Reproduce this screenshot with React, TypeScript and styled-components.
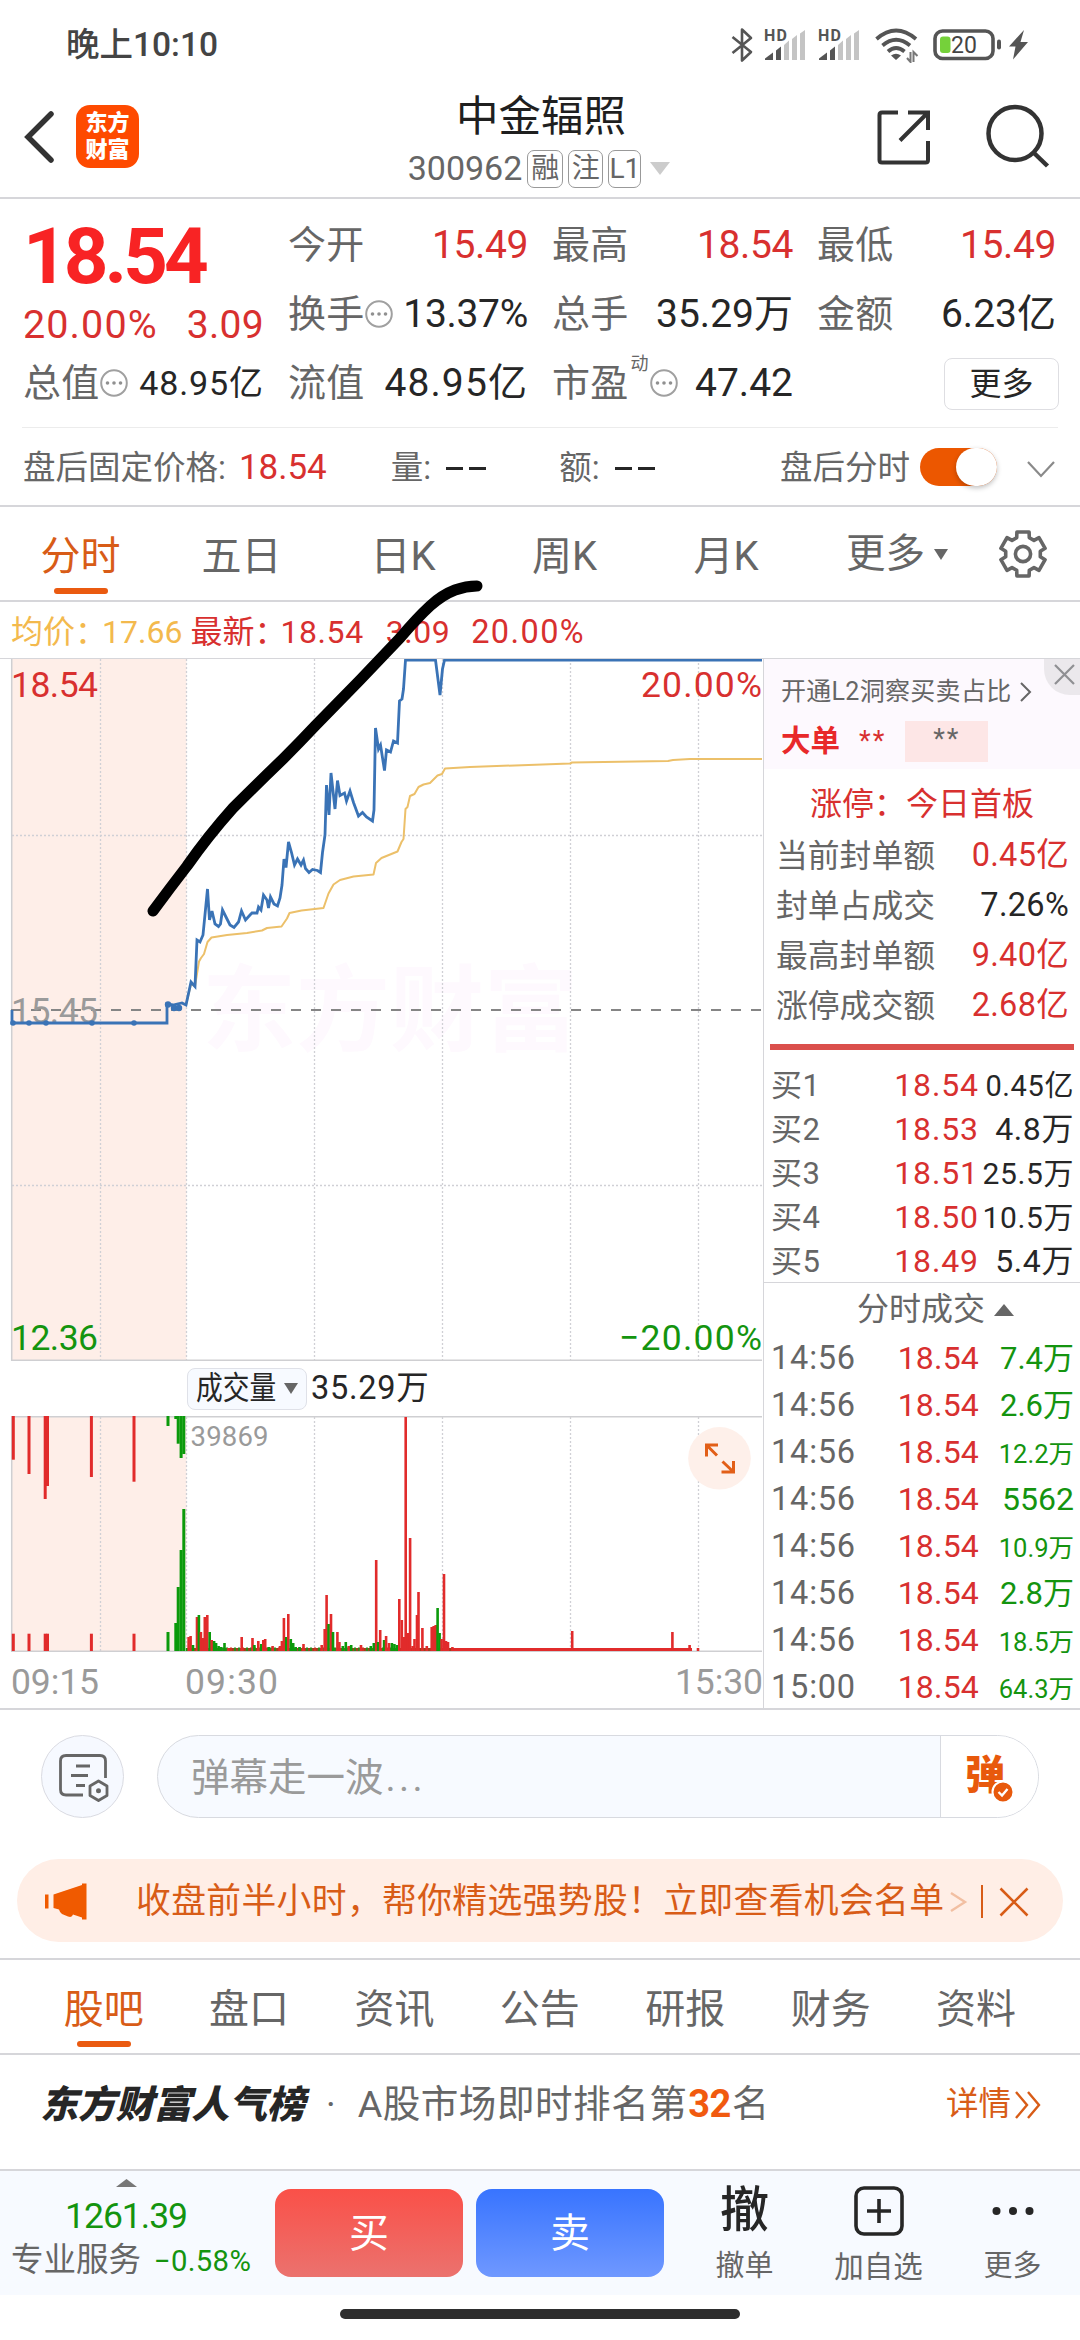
import React from "react";
import styled, { createGlobalStyle, css } from "styled-components";

const RED = "#d8302f";
const GREEN = "#14940f";
const GREY = "#666666";
const DARK = "#262626";
const ORANGE = "#d85c17";
const LINE = "#d6d6da";

const GlobalStyle = createGlobalStyle`
  html, body { margin: 0; padding: 0; background: #fff; }
  body { width: 1080px; overflow-x: hidden; font-family: Roboto, "Noto Sans CJK SC", sans-serif; }
  * { box-sizing: border-box; }
  svg { display: block; flex: none; }
`;

interface TxtProps {
  $s: number;
  $c?: string;
  $w?: number;
  $ls?: number;
  $ml?: number;
  $dy?: number;
}

const Txt = styled.span<TxtProps>`
  display: block;
  flex: none;
  white-space: nowrap;
  line-height: 1.1;
  font-size: ${(p) => p.$s}px;
  color: ${(p) => p.$c ?? GREY};
  font-weight: ${(p) => p.$w ?? 400};
  letter-spacing: ${(p) => p.$ls ?? 0}px;
  margin-left: ${(p) => p.$ml ?? 0}px;
  ${(p) => p.$dy !== undefined && css`padding-top: ${p.$dy}px;`}
`;

const Page = styled.main`
  position: relative;
  width: 1080px;
  height: 2340px;
  display: flex;
  flex-direction: column;
  background: #fff;
  overflow: hidden;
`;

/* ---------- status bar ---------- */
const StatusBar = styled.header`
  height: 88px;
  padding: 2px 51px 0 66px;
  display: flex;
  align-items: center;
  justify-content: space-between;
`;
const StatusIcons = styled.div`
  display: flex;
  align-items: center;
`;

/* ---------- title bar ---------- */
const TitleBar = styled.div`
  height: 111px;
  display: grid;
  grid-template-columns: 380px 1fr 380px;
  border-bottom: 2px solid ${LINE};
`;
const TitleLeft = styled.div`
  display: flex;
  align-items: center;
  padding: 0 0 12px 23px;
`;
const Logo = styled.div`
  width: 63px;
  height: 63px;
  margin-left: 21px;
  border-radius: 14px;
  background: #fe4a00;
  display: flex;
  flex-direction: column;
  align-items: center;
  justify-content: center;
  color: #fff;
  font-weight: 900;
  font-size: 22px;
  line-height: 27px;
  padding-bottom: 1px;
`;
const TitleMid = styled.div`
  display: flex;
  flex-direction: column;
  align-items: center;
  padding: 6px 0 0 2px;
`;
const CodeRow = styled.div`
  display: flex;
  align-items: center;
  height: 38px;
  margin: 9px 0 0 -4px;
`;
const Badge = styled.span<{ $w: number }>`
  width: ${(p) => p.$w}px;
  height: 38px;
  margin-left: 5px;
  border: 1.5px solid #999;
  border-radius: 7px;
  display: flex;
  align-items: center;
  justify-content: center;
  font-size: 28px;
  line-height: 1;
  color: ${GREY};
`;
const TitleRight = styled.div`
  display: flex;
  justify-content: flex-end;
  padding: 15px 30px 0 0;
  gap: 56px;
`;

/* ---------- quote block ---------- */
const Quote = styled.section`
  height: 229px;
  margin: 0 22px;
  padding: 12px 0 0 0;
  border-bottom: 1.5px solid #ececec;
  display: grid;
  grid-template-columns: 242px 264px 265px 263px;
`;
const QuoteCol = styled.div<{ $l: number }>`
  display: flex;
  flex-direction: column;
  padding-left: ${(p) => p.$l}px;
`;
const Cell = styled.div`
  height: 69px;
  display: flex;
  align-items: center;
  justify-content: space-between;
`;
const ChangeRow = styled(Cell)`
  height: 57px;
  padding-top: 9px;
`;
const LabelBox = styled.div`
  display: flex;
  align-items: center;
`;
const Sup = styled.span`
  align-self: flex-start;
  font-size: 18px;
  line-height: 18px;
  margin: -8px 1px 0 2px;
  color: ${GREY};
`;
const BigPrice = styled.div`
  height: 81px;
  padding-top: 7px;
  font-size: 78px;
  line-height: 78px;
  font-weight: 700;
  letter-spacing: -4px;
  color: #f82324;
`;
const MoreBtn = styled.button`
  width: 115px;
  height: 52px;
  margin: 0 -3px 0 auto;
  padding: 0;
  border: 1.5px solid #dedee2;
  border-radius: 8px;
  background: #fff;
  font: 400 32px/1 Roboto, "Noto Sans CJK SC", sans-serif;
  color: ${DARK};
`;

/* ---------- after-hours ---------- */
const AfterHours = styled.section`
  height: 79px;
  padding: 4px 25px 0 23px;
  border-bottom: 2px solid ${LINE};
  display: flex;
  align-items: center;
`;
const Dashes = styled.span`
  display: flex;
  gap: 6px;
  margin-left: 15px;
  &::before, &::after {
    content: "";
    width: 17px;
    height: 3px;
    background: ${DARK};
  }
`;
const Switch = styled.span`
  width: 77px;
  height: 38px;
  margin: -3px 0 0 10px;
  border-radius: 19px;
  background: #ec5700;
  display: flex;
  justify-content: flex-end;
  &::after {
    content: "";
    width: 41px;
    height: 38px;
    border-radius: 20px;
    background: #fff;
    box-shadow: 0 2px 5px rgba(0, 0, 0, 0.25);
  }
`;

/* ---------- tabs ---------- */
const TabBar = styled.nav<{ $h: number; $pl: number; $top?: boolean }>`
  height: ${(p) => p.$h}px;
  padding-left: ${(p) => p.$pl}px;
  display: flex;
  border-bottom: 2px solid ${LINE};
  border-top: ${(p) => (p.$top ? `2px solid ${LINE}` : "0")};
`;
const Tab = styled.div<{ $w: number; $on?: boolean }>`
  width: ${(p) => p.$w}px;
  height: 100%;
  padding: 28px 0 6px;
  display: flex;
  flex-direction: column;
  align-items: center;
  justify-content: space-between;
  font-size: 40px;
  line-height: 43px;
  color: ${(p) => (p.$on ? ORANGE : GREY)};
  &::after {
    content: "";
    width: 54px;
    height: 6px;
    border-radius: 3px;
    background: ${(p) => (p.$on ? "#ea5a10" : "transparent")};
  }
`;
const MoreTab = styled.div`
  display: flex;
  align-items: center;
  padding-left: 39px;
  height: 94px;
`;

const InfoRow = styled.div`
  height: 57px;
  padding: 5px 0 0 11px;
  display: flex;
  align-items: center;
  border-bottom: 1.5px solid ${LINE};
`;

/* ---------- market panel ---------- */
const Market = styled.section`
  height: 1051px;
  display: flex;
  border-bottom: 2px solid ${LINE};
`;
const ChartCol = styled.div`
  width: 763px;
  display: flex;
  flex-direction: column;
`;
const VolHead = styled.div`
  height: 57px;
  padding-left: 187px;
  display: flex;
  align-items: center;
`;
const VolChip = styled.div`
  width: 120px;
  height: 42px;
  border: 1.5px solid #dfe1e8;
  border-radius: 8px;
  background: #f7faff;
  display: flex;
  align-items: center;
  padding-left: 8px;
  gap: 9px;
`;
const Narrow = styled.span`
  width: 79px;
  font-size: 31.5px;
  line-height: 34px;
  white-space: nowrap;
  color: ${DARK};
  transform: scaleX(0.85);
  transform-origin: left center;
`;
const Side = styled.aside`
  width: 317px;
  border-left: 1.5px solid ${LINE};
  display: flex;
  flex-direction: column;
  & > * { flex: none; }
`;
const L2 = styled.div`
  position: relative;
  height: 110px;
  padding: 18px 0 0 17px;
  background: #fdf9fe;
`;
const L2Line = styled.div<{ $h: number }>`
  display: flex;
  align-items: center;
  height: ${(p) => p.$h}px;
`;
const StarBox = styled.div`
  width: 83px;
  height: 41px;
  margin-left: 19px;
  padding-top: 4px;
  background: #fde6e6;
  display: flex;
  justify-content: center;
`;
const CloseTag = styled.div`
  position: absolute;
  top: 0;
  right: 0;
  width: 36px;
  height: 36px;
  border-bottom-left-radius: 26px;
  background: #ebe8ec;
  padding: 5px 0 0 10px;
`;
const LimitTitle = styled.div`
  height: 60px;
  padding: 10px 0 0 46px;
`;
const LimitRow = styled.div`
  height: 50px;
  padding: 4px 11px 0 12px;
  display: flex;
  align-items: center;
  justify-content: space-between;
`;
const RedBar = styled.div`
  height: 6px;
  margin: 15px 6px 12px 6px;
  background: #db4f4c;
`;
const BookRow = styled.div<{ $h: number; $pt: number }>`
  height: ${(p) => p.$h}px;
  display: grid;
  grid-template-columns: 110px 98px 1fr;
  align-items: baseline;
  padding: ${(p) => p.$pt}px 6px 0 7px;
  & > :nth-child(n + 2) { justify-self: end; }
`;
const DealHead = styled.div`
  height: 51px;
  padding: 3px 0 0 93px;
  border-top: 1.5px solid ${LINE};
  display: flex;
  align-items: center;
  gap: 9px;
`;

/* ---------- comment bar ---------- */
const CommentBar = styled.section`
  height: 149px;
  padding: 25px 41px 0 41px;
  display: flex;
  align-items: flex-start;
`;
const RoundBtn = styled.div`
  width: 83px;
  height: 83px;
  border: 1.5px solid #dadbe2;
  border-radius: 50%;
  background: #f6f9ff;
  display: flex;
  align-items: center;
  justify-content: center;
`;
const Field = styled.div`
  width: 882px;
  height: 83px;
  margin-left: 33px;
  border: 1.5px solid #d8dae0;
  border-radius: 42px;
  background: #f7faff;
  display: flex;
  overflow: hidden;
`;
const FieldText = styled.div`
  width: 783px;
  padding: 3px 0 0 33px;
  display: flex;
  align-items: center;
  border-right: 1.5px solid #d8dae0;
`;
const DanmuBtn = styled.div`
  position: relative;
  flex: 1;
  background: #fff;
  padding: 18px 0 0 24px;
`;
const BadgeIcon = styled.div`
  position: absolute;
  left: 50px;
  top: 44px;
`;

/* ---------- banner ---------- */
const Banner = styled.section`
  height: 83px;
  margin: 0 17px 16px;
  padding: 2px 0 0 28px;
  border-radius: 42px;
  background: #ffeee6;
  display: flex;
  align-items: center;
  flex: none;
`;
const BannerRule = styled.span`
  width: 1.5px;
  height: 33px;
  margin: 0 16px 0 11px;
  background: ${ORANGE};
`;

/* ---------- ranking ---------- */
const Rank = styled.section`
  height: 116px;
  padding: 0 37px 14px 40px;
  border-bottom: 2px solid ${LINE};
  display: flex;
  align-items: center;
`;
const RankTitle = styled.span`
  width: 268px;
  font-size: 38px;
  line-height: 44px;
  font-weight: 900;
  letter-spacing: -0.2px;
  font-style: italic;
  white-space: nowrap;
  color: ${DARK};
`;
const Spacer = styled.span`
  flex: 1;
`;

/* ---------- bottom bar ---------- */
const BottomBar = styled.footer`
  height: 124px;
  background: #f7faff;
  display: flex;
  align-items: flex-start;
  & > * { flex: none; }
`;
const IndexBox = styled.div`
  width: 275px;
  padding: 8px 0 0 11px;
  display: flex;
  flex-direction: column;
`;
const IndexLine = styled.div<{ $mt: number; $pl?: number }>`
  display: flex;
  align-items: center;
  height: 36px;
  margin-top: ${(p) => p.$mt}px;
  padding-left: ${(p) => p.$pl ?? 0}px;
`;
const TradeBtn = styled.button<{ $from: string; $to: string }>`
  width: 188px;
  height: 88px;
  margin: 18px 13px 0 0;
  padding: 2px 0 0 0;
  border: 0;
  border-radius: 16px;
  background: linear-gradient(${(p) => p.$from}, ${(p) => p.$to});
  color: #fff;
  font: 400 40px/1 Roboto, "Noto Sans CJK SC", sans-serif;
`;
const ActionBtn = styled.div<{ $w: number }>`
  width: ${(p) => p.$w}px;
  display: flex;
  flex-direction: column;
  align-items: center;
`;
const ActionIcon = styled.div`
  height: 80px;
  display: flex;
  align-items: center;
`;
const HomeArea = styled.div`
  height: 44px;
  padding-top: 14px;
  display: flex;
  justify-content: center;
  &::after {
    content: "";
    width: 400px;
    height: 10px;
    border-radius: 5px;
    background: #2e2e2e;
  }
`;

const Scribble = styled.svg`
  position: absolute;
  left: 140px;
  top: 570px;
  pointer-events: none;
`;

/* ---------- small icons ---------- */
const Tri = ({ w, h, c, up }: { w: number; h: number; c: string; up?: boolean }) => (
  <svg width={w} height={h} viewBox="0 0 10 10" preserveAspectRatio="none">
    <path d={up ? "M0 10L5 0L10 10Z" : "M0 0H10L5 10Z"} fill={c} />
  </svg>
);

const Dots = () => (
  <svg width="28" height="28" viewBox="0 0 28 28">
    <circle cx="14" cy="14" r="12.8" fill="none" stroke="#a0a0a0" strokeWidth="2" />
    {[7.5, 14, 20.5].map((x) => (
      <circle key={x} cx={x} cy="14" r="1.8" fill="#909090" />
    ))}
  </svg>
);

const Signal = () => (
  <svg width="42" height="42" viewBox="0 -4 42 42">
    <text x="0" y="13" fontSize="16" fontWeight="700" fill="#555" textLength="23">HD</text>
    <path d="M1 32V30.5L9 24.5V32Z" fill="#555" />
    <path d="M12 32V22.5L17 18.5V32Z" fill="#555" />
    <path d="M20 32V17L25 12.5V32ZM28 32V11L33 7V32ZM36 32V5.5L41 2V32Z" fill="#c4c4c4" />
  </svg>
);

const StatusGlyphs = () => (
  <StatusIcons>
    <svg width="22" height="36" viewBox="0 0 22 36">
      <path d="M1.5 10L20 25L11 33.5V2.5L20 11L1.5 26" fill="none" stroke="#555" strokeWidth="2.6" strokeLinejoin="round" />
    </svg>
    <svg width="11" height="10" />
    <Signal />
    <svg width="12" height="10" />
    <Signal />
    <svg width="15" height="10" />
    <svg width="44" height="36" viewBox="0 0 44 36">
      <g fill="none" stroke="#555" strokeWidth="3.8">
        <path d="M1.5 12Q21 -5 41 12" />
        <path d="M7.5 18.5Q21 7 35 18.5" />
        <path d="M13 24.5Q21 17.5 29.5 24.5" />
      </g>
      <path d="M16 28.5Q21 25 26 28.5L21 33Z" fill="#555" />
      <path d="M35.5 25V35L32 31M38.5 35V25L42.5 29" fill="none" stroke="#777" strokeWidth="2" />
    </svg>
    <svg width="14" height="10" />
    <svg width="70" height="32" viewBox="0 0 70 32">
      <rect x="2" y="2" width="58" height="27.5" rx="7.5" fill="none" stroke="#555" strokeWidth="3.6" />
      <rect x="7" y="7.5" width="10.5" height="16.5" rx="3" fill="#75d13a" />
      <rect x="64" y="10.5" width="4" height="10" rx="2" fill="#555" />
      <text x="18" y="23.5" fontSize="23" fill="#444">20</text>
    </svg>
    <svg width="26" height="32" viewBox="0 0 26 32">
      <path d="M21 1L6 17.5H12.5L10 30.5L25 13H17.5Z" fill="#555" />
    </svg>
  </StatusIcons>
);

const Gear = () => {
  const pts: string[] = [];
  for (let i = 0; i < 6; i++) {
    const base = (i * 60 - 90) * (Math.PI / 180);
    [[-0.37, 17.5], [-0.27, 22.8], [0.27, 22.8], [0.37, 17.5]].forEach(([a, r]) => {
      pts.push(`${(25 + r * Math.cos(base + a)).toFixed(1)},${(25 + r * Math.sin(base + a)).toFixed(1)}`);
    });
  }
  return (
    <svg width="50" height="50" viewBox="0 0 50 50" fill="none" stroke={GREY} strokeWidth="3.6" strokeLinejoin="round">
      <polygon points={pts.join(" ")} />
      <circle cx="25" cy="25" r="7.6" />
    </svg>
  );
};

/* ---------- charts ---------- */
const PRICE =
  "12,1011 12,1024 167,1024 167,1005 173,1006 182,1004 186,1006 191,983 195,987.5 197,941 200,943 203,936 207.5,890 209.5,921 212,912 215,925 218.5,927.5 220.5,925 222.5,911 227,920 230,926 234,928.5 238.5,923 241.5,912 245.5,921 250,916 252,914 257,914 258.5,908 261,911 263.5,896 267,901 268.5,909 270.5,898 274,905 277.5,907 280,899 282,886 284,860 286,868.5 288.5,843 291.5,853.5 294.5,866 297.5,860 301,866 303.5,861 305.5,869.5 309,873.5 312.5,870.5 317.5,871.5 320.5,873.5 322.5,853.5 325,836 326.5,786 329,816 331,774 335,810 337.5,781.5 340,796.5 344.5,794 346.5,802 350,792 353.5,803.5 358.5,817 362.5,813.5 366.5,818 372.5,822 374,811 375.5,729 378.5,750 380.5,746 384.5,771.5 386.5,751 390.5,753 393.5,742 397.5,744 399.5,702 402,700 403.5,690 405.5,661 435.5,661 440,696 442.5,670 444.5,661 762,661";
const AVERAGE =
  "186,1006 191,985 195,987 199,962.5 201,959 204,955 207.5,943 211.5,938.5 227,936 247,934 262,931.5 267,929 281.5,927.5 287,919.5 289.5,914 301.5,911.5 323.5,909 328.5,894.5 333.5,885.5 340,881 353.5,877.5 373.5,875.5 376,864 381.5,859 397.5,852.5 401.5,843 403.5,840 405.5,810 407.5,808 410,797 414.5,795 418.5,788 423.5,785.5 430,784 437.5,776.5 442,775 445,769.5 470,768 570,764.5 572,763.5 668,762 673,761 690,760 762,760";
const GRID_X = [100.5, 186.5, 314.5, 442.5, 570.5, 698.5];

const Label = styled.text`
  font-size: 35.5px;
`;

const PriceChart = () => (
  <svg width="763" height="702" viewBox="0 660 763 702">
    <rect x="12" y="660" width="174.5" height="701" fill="#feeee8" />
    <text x="202" y="1045" fontSize="94" fontWeight="700" fill="#fef9fe" textLength="376">东方财富</text>
    <g stroke="#d0d0d5" strokeWidth="1.3" strokeDasharray="2 2">
      {GRID_X.map((x) => (
        <line key={x} x1={x} x2={x} y1="660" y2="1361" />
      ))}
      <line x1="12" x2="762" y1="836.5" y2="836.5" />
      <line x1="12" x2="762" y1="1186.5" y2="1186.5" />
    </g>
    <path d="M11.7 660V1361.3H762" fill="none" stroke="#cfcfd2" strokeWidth="1.5" />
    <line x1="11" x2="762" y1="1011" y2="1011" stroke="#858585" strokeWidth="2" strokeDasharray="10 10" />
    <polyline points={AVERAGE} fill="none" stroke="#ecc06a" strokeWidth="2" strokeLinejoin="round" />
    <Label x="11" y="1024" fill="#9a9a9a" textLength="87">15.45</Label>
    <polyline points={PRICE} fill="none" stroke="#3a73b6" strokeWidth="2.8" />
    {[13, 29, 46, 92, 134].map((x) => (
      <circle key={x} cx={x} cy="1024" r="2.8" fill="#3a73b6" />
    ))}
    {[168, 174, 179].map((x, i) => (
      <circle key={x} cx={x} cy={i ? 1009 : 1005.5} r="3.2" fill="#3a73b6" />
    ))}
    <Label x="11" y="697.5" fill={RED} textLength="87">18.54</Label>
    <Label x="641" y="697.5" fill={RED} textLength="121">20.00%</Label>
    <Label x="11" y="1351" fill={GREEN} textLength="87">12.36</Label>
    <Label x="619" y="1351" fill={GREEN} textLength="143">−20.00%</Label>
  </svg>
);

type Bar = [number, number, string];
const BARS: Bar[] = [
  [187.1, 3, "g"], [188.6, 14, "r"], [190.6, 15, "r"], [193, 6, "g"], [197, 34, "r"], [198.9, 36, "g"],
  [200.9, 19, "r"], [202.8, 13, "r"], [204.8, 34, "r"], [207.3, 36, "r"], [209.7, 19, "g"], [211.7, 11, "r"],
  [214.1, 10, "g"], [216.1, 8, "g"], [218.6, 5, "g"], [221, 4, "g"], [224.5, 8, "g"], [228.4, 3, "r"],
  [241.7, 14, "r"], [252.5, 13, "r"], [254.4, 6, "g"], [258.3, 10, "r"], [261.3, 7, "g"], [263.3, 11, "r"],
  [265.2, 12, "r"], [268.7, 4, "g"], [272.6, 5, "r"], [280, 5, "r"], [281.9, 10, "r"], [283.9, 33, "r"],
  [286.3, 14, "g"], [288.3, 37, "r"], [290.8, 12, "g"], [293.2, 8, "g"], [295.7, 4, "g"], [299.6, 4, "g"],
  [303.5, 7, "r"], [321.7, 6, "r"], [324.7, 22, "r"], [326.6, 56, "r"], [328.6, 27, "g"], [331, 37, "r"],
  [333, 19, "g"], [337.4, 19, "r"], [339.4, 9, "r"], [342.8, 5, "g"], [345.8, 9, "g"], [348.7, 5, "r"],
  [351.2, 6, "g"], [361, 6, "r"], [370.8, 5, "g"], [373.8, 8, "g"], [376.2, 91, "r"], [378.2, 9, "g"],
  [380.2, 21, "r"], [384.1, 11, "g"], [386.1, 15, "r"], [389, 8, "r"], [391.9, 8, "g"], [394.4, 7, "g"],
  [396.9, 6, "g"], [399.3, 52, "r"], [401.8, 31, "r"], [403.7, 14, "r"], [405.7, 234, "r"], [408.2, 18, "r"],
  [410.1, 113, "r"], [412.6, 5, "r"], [414.5, 12, "r"], [417, 36, "r"], [418.5, 59, "r"], [422.4, 23, "r"],
  [426.8, 5, "r"], [431.7, 24, "r"], [433.7, 25, "r"], [435.7, 26, "r"], [437.6, 43, "g"], [439.6, 18, "g"],
  [441.6, 12, "r"], [444, 77, "r"], [446, 10, "r"], [448, 9, "r"], [452.4, 4, "r"], [572.2, 20, "r"],
  [672.4, 19, "r"], [689.6, 6, "r"], [698, 3, "r"],
];
const AUCTION: [number, number, number, string][] = [
  [13.3, 1461.7, 1635.7, "r"], [29, 1476, 1635.7, "r"], [45.2, 1501, 1635.7, "r"], [47.5, 1488, 1635.7, "r"],
  [91.4, 1479, 1635.7, "r"], [134, 1483.7, 1635.7, "r"], [168, 1428, 1634, "g"], [175.8, 1421, 1625, "g"],
  [178.2, 1445.7, 1589, "g"], [181.1, 1460, 1552, "g"], [183.8, 1456, 1511, "g"],
];
const barColor = (k: string) => (k === "g" ? "#0b9a0b" : "#e12b2b");

const VolumeChart = () => (
  <svg width="763" height="292" viewBox="0 1418 763 292">
    <rect x="12" y="1418" width="174.5" height="235" fill="#feeee8" />
    <g stroke="#d0d0d5" strokeWidth="1.3" strokeDasharray="2 2">
      {GRID_X.map((x) => (
        <line key={x} x1={x} x2={x} y1="1419" y2="1653" />
      ))}
    </g>
    <path d="M762 1418.7H11.7V1653.2H762" fill="none" stroke="#cfcfd2" strokeWidth="1.5" />
    <rect x="187" y="1650" width="265" height="3" fill="#a0401c" />
    <rect x="452" y="1650" width="240" height="3" fill="#e12b2b" />
    {Array.from({ length: 44 }, (_, i) => (
      <rect key={i} x={218 + i * 4} y="1649.5" width="2" height="3.5" fill={i % 3 ? "#2c8a1a" : "#d03020"} />
    ))}
    {AUCTION.map(([x, a, b, k]) => (
      <g key={x} fill={barColor(k)}>
        <rect x={x - 1.5} y="1418" width="3" height={a - 1418} />
        <rect x={x - 1.5} y={b} width="3" height={1653 - b} />
      </g>
    ))}
    {BARS.map(([x, h, k]) => (
      <rect key={x} x={x - 1.3} y={1653 - h} width="2.6" height={h} fill={barColor(k)} />
    ))}
    <text x="190.5" y="1447.7" fontSize="27.5" fill="#9a9a9a" textLength="78">39869</text>
    <circle cx="719.5" cy="1460.3" r="31.3" fill="#fef0ea" />
    <g fill="none" stroke="#e25f18" strokeWidth="3">
      <path d="M706.5 1458.5V1447H718M707 1447.5L717 1457.5" />
      <path d="M733.5 1463V1474H721.5M733 1473.5L722.5 1463.5" />
    </g>
    <Label x="11" y="1696" fill="#9a9a9a" textLength="88">09:15</Label>
    <Label x="185" y="1696" fill="#9a9a9a" textLength="93">09:30</Label>
    <Label x="675" y="1696" fill="#9a9a9a" textLength="88">15:30</Label>
  </svg>
);

/* ---------- data ---------- */
const LIMITS = [
  ["当前封单额", "0.45亿", RED],
  ["封单占成交", "7.26%", DARK],
  ["最高封单额", "9.40亿", RED],
  ["涨停成交额", "2.68亿", RED],
];
const BIDS: [string, string, string, number][] = [
  ["买1", "18.54", "0.45亿", 29],
  ["买2", "18.53", "4.8万", 32],
  ["买3", "18.51", "25.5万", 30],
  ["买4", "18.50", "10.5万", 30],
  ["买5", "18.49", "5.4万", 32],
];
const DEALS: [string, string, number][] = [
  ["14:56", "7.4万", 31],
  ["14:56", "2.6万", 31],
  ["14:56", "12.2万", 25.5],
  ["14:56", "5562", 32],
  ["14:56", "10.9万", 25.5],
  ["14:56", "2.8万", 31],
  ["14:56", "18.5万", 25.5],
  ["15:00", "64.3万", 25.5],
];

const Stat = ({ label, value, c = DARK, dots, sup, s = 39, ls = 0 }: {
  label: string; value: string; c?: string; dots?: boolean; sup?: string; s?: number; ls?: number;
}) => (
  <Cell>
    <LabelBox>
      <Txt $s={38} $ls={0.3}>{label}</Txt>
      {sup && <Sup>{sup}</Sup>}
      {dots && <Dots />}
    </LabelBox>
    <Txt $s={s} $c={c} $ls={ls}>{value}</Txt>
  </Cell>
);

export default function App() {
  return (
    <Page>
      <GlobalStyle />
      <StatusBar>
        <Txt $s={33.5} $c="#444" $w={500}>晚上10:10</Txt>
        <StatusGlyphs />
      </StatusBar>

      <TitleBar>
        <TitleLeft>
          <svg width="32" height="54" viewBox="0 0 32 54">
            <path d="M28 4L5 27L28 50" fill="none" stroke="#333" strokeWidth="5.5" strokeLinecap="round" />
          </svg>
          <Logo>
            <span>东方</span>
            <span>财富</span>
          </Logo>
        </TitleLeft>
        <TitleMid>
          <Txt $s={42.5} $c="#1f1f1f">中金辐照</Txt>
          <CodeRow>
            <Txt $s={34}>300962</Txt>
            <Badge $w={36}>融</Badge>
            <Badge $w={35}>注</Badge>
            <Badge $w={33}>L1</Badge>
            <svg width="9" height="10" />
            <Tri w={20} h={13} c="#cccccc" />
          </CodeRow>
        </TitleMid>
        <TitleRight>
          <svg width="54" height="66" viewBox="0 0 54 66" fill="none" stroke="#333" strokeWidth="4">
            <path d="M22 9.5H6Q3.5 9.5 3.5 12V57Q3.5 59.5 6 59.5H49.5Q52 59.5 52 57V38" />
            <path d="M32 9.5H52V27M51 10.5L24 37.5" />
          </svg>
          <svg width="64" height="66" viewBox="0 0 64 66" fill="none" stroke="#333" strokeWidth="4.5">
            <circle cx="29" cy="30.5" r="26.5" />
            <path d="M48 50L61.5 63" />
          </svg>
        </TitleRight>
      </TitleBar>

      <Quote>
        <QuoteCol $l={1}>
          <BigPrice>18.54</BigPrice>
          <ChangeRow>
            <Txt $s={39.5} $c={RED} $ls={1.1}>20.00%</Txt>
            <Txt $s={39} $c={RED} $ls={0.3}>3.09</Txt>
          </ChangeRow>
          <Stat label="总值" value="48.95亿" dots s={34} ls={0.9} />
        </QuoteCol>
        <QuoteCol $l={24}>
          <Stat label="今开" value="15.49" c={RED} ls={-0.4} />
          <Stat label="换手" value="13.37%" dots ls={-0.3} />
          <Stat label="流值" value="48.95亿" ls={1.1} />
        </QuoteCol>
        <QuoteCol $l={24}>
          <Stat label="最高" value="18.54" c={RED} ls={-0.4} />
          <Stat label="总手" value="35.29万" />
          <Stat label="市盈" value="47.42" sup="动" dots />
        </QuoteCol>
        <QuoteCol $l={24}>
          <Stat label="最低" value="15.49" c={RED} ls={-0.4} />
          <Stat label="金额" value="6.23亿" />
          <Cell>
            <MoreBtn>更多</MoreBtn>
          </Cell>
        </QuoteCol>
      </Quote>

      <AfterHours>
        <Txt $s={32.5}>盘后固定价格:</Txt>
        <Txt $s={35} $c={RED} $ml={13}>18.54</Txt>
        <Txt $s={32.5} $ml={64}>量:</Txt>
        <Dashes />
        <Txt $s={32.5} $ml={73}>额:</Txt>
        <Dashes />
        <Spacer />
        <Txt $s={32.5}>盘后分时</Txt>
        <Switch />
        <svg width="58" height="20" viewBox="0 0 58 20">
          <path d="M31 3L44 17L57 3" fill="none" stroke="#8a8a8a" strokeWidth="2.2" />
        </svg>
      </AfterHours>

      <TabBar $h={95} $pl={0}>
        <Tab $w={161} $on>分时</Tab>
        <Tab $w={161}>五日</Tab>
        <Tab $w={162}>日K</Tab>
        <Tab $w={161}>周K</Tab>
        <Tab $w={162}>月K</Tab>
        <MoreTab>
          <Txt $s={39.5}>更多</Txt>
          <svg width="9" height="10" />
          <Tri w={14} h={11} c={GREY} />
          <svg width="50" height="10" />
          <Gear />
        </MoreTab>
      </TabBar>

      <InfoRow>
        <Txt $s={32} $c="#f3b94d">均价：</Txt>
        <Txt $s={32} $c="#f3b94d" $ml={-5}>17.66</Txt>
        <Txt $s={32} $c={RED} $ml={8}>最新：</Txt>
        <Txt $s={32} $c={RED} $ml={-6} $ls={0.6}>18.54</Txt>
        <Txt $s={32} $c={RED} $ml={22} $ls={0.5}>3.09</Txt>
        <Txt $s={32.5} $c={RED} $ml={21} $ls={1.4}>20.00%</Txt>
      </InfoRow>

      <Market>
        <ChartCol>
          <PriceChart />
          <VolHead>
            <VolChip>
              <Narrow>成交量</Narrow>
              <Tri w={14} h={11} c={GREY} />
            </VolChip>
            <Txt $s={32.5} $c={DARK} $ml={4} $ls={0.7}>35.29万</Txt>
          </VolHead>
          <VolumeChart />
        </ChartCol>
        <Side>
          <L2>
            <L2Line $h={30}>
              <Txt $s={25} $ls={0.3}>开通L2洞察买卖占比</Txt>
              <svg width="20" height="20" viewBox="0 0 20 20">
                <path d="M9 1L18 10L9 19" fill="none" stroke={GREY} strokeWidth="2" />
              </svg>
            </L2Line>
            <L2Line $h={69}>
              <Txt $s={29.5} $c="#e8292a" $w={700}>大单</Txt>
              <Txt $s={27} $c={RED} $ml={19} $ls={2}>**</Txt>
              <StarBox>
                <Txt $s={27} $ls={2}>**</Txt>
              </StarBox>
            </L2Line>
            <CloseTag>
              <svg width="22" height="22" viewBox="0 0 22 22">
                <path d="M1 1L20 20M20 1L1 20" stroke="#8f8f93" strokeWidth="2.2" />
              </svg>
            </CloseTag>
          </L2>
          <LimitTitle>
            <Txt $s={32} $c={RED} $dy={8}>涨停：今日首板</Txt>
          </LimitTitle>
          {LIMITS.map(([l, v, c]) => (
            <LimitRow key={l}>
              <Txt $s={31.8}>{l}</Txt>
              <Txt $s={32.5} $c={c} $ls={0.3}>{v}</Txt>
            </LimitRow>
          ))}
          <RedBar />
          {BIDS.map(([l, p, q, s]) => (
            <BookRow key={l} $h={44} $pt={5.5}>
              <Txt $s={31} $ls={0.5}>{l}</Txt>
              <Txt $s={32} $c={RED} $ls={0.9}>{p}</Txt>
              <Txt $s={s} $c={DARK} $ls={0.6}>{q}</Txt>
            </BookRow>
          ))}
          <DealHead>
            <Txt $s={32}>分时成交</Txt>
            <Tri w={20} h={12} c={GREY} up />
          </DealHead>
          {DEALS.map(([t, q, s], i) => (
            <BookRow key={i} $h={47.1} $pt={7.5}>
              <Txt $s={32.5} $ls={0.8}>{t}</Txt>
              <Txt $s={32} $c={RED} $ls={0.2}>18.54</Txt>
              <Txt $s={s} $c={GREEN}>{q}</Txt>
            </BookRow>
          ))}
        </Side>
      </Market>

      <CommentBar>
        <RoundBtn>
          <svg width="52" height="52" viewBox="0 0 52 52" fill="none" stroke={GREY} strokeWidth="2.8">
            <path d="M26 44H9Q3.5 44 3.5 38.5V10Q3.5 4.5 9 4.5H43Q48.5 4.5 48.5 10V27" />
            <path d="M19 15H33M14 24.5H31M19 34.5H28" />
            <path d="M41.5 30L50 35V44.5L41.5 49.5L33 44.5V35Z" strokeLinejoin="round" />
            <circle cx="41.5" cy="39.8" r="2.5" fill={GREY} stroke="none" />
          </svg>
        </RoundBtn>
        <Field>
          <FieldText>
            <Txt $s={38.5} $c="#9a9a9a">弹幕走一波</Txt>
            <Txt $s={38.5} $c="#9a9a9a" $ls={3.4} $ml={2}>...</Txt>
          </FieldText>
          <DanmuBtn>
            <Txt $s={40} $c="#e8590c" $w={900}>弹</Txt>
            <BadgeIcon>
              <svg width="24" height="24" viewBox="0 0 24 24">
                <circle cx="12" cy="12" r="10.5" fill="#e8590c" stroke="#fff" strokeWidth="2" />
                <path d="M7.5 12L11 15.5L16.5 9" fill="none" stroke="#fff" strokeWidth="2.4" />
              </svg>
            </BadgeIcon>
          </DanmuBtn>
        </Field>
      </CommentBar>

      <Banner>
        <svg width="91" height="38" viewBox="0 0 91 38" fill="#f05a00">
          <path d="M0 11.5H3.5V25.5H0ZM8.5 11.5L37 2V0.5H41.5V36.5H37V34.5L28 31.5Q27 35 23 33.5L17 31Q15 30 14 26.5L8.5 25Z" />
        </svg>
        <Txt $s={34.8} $c={ORANGE} $ls={0.35}>收盘前半小时，帮你精选强势股！立即查看机会名单</Txt>
        <svg width="26" height="26" viewBox="0 0 26 26">
          <path d="M7 4L21 13L7 22" fill="none" stroke="#f2bfa2" strokeWidth="2.4" />
        </svg>
        <BannerRule />
        <svg width="30" height="30" viewBox="0 0 30 30">
          <path d="M1.5 1.5L28.5 28.5M28.5 1.5L1.5 28.5" stroke={ORANGE} strokeWidth="2.6" />
        </svg>
      </Banner>

      <TabBar $h={97} $pl={31} $top>
        {["股吧", "盘口", "资讯", "公告", "研报", "财务", "资料"].map((t, i) => (
          <Tab key={t} $w={145.4} $on={i === 0}>{t}</Tab>
        ))}
      </TabBar>

      <Rank>
        <RankTitle>东方财富人气榜</RankTitle>
        <Txt $s={37} $ml={18}>·</Txt>
        <Txt $s={37.6} $ml={22} $ls={0.5}>A股市场即时排名第</Txt>
        <Txt $s={38} $c="#f15a0f" $w={700} $ml={1} $ls={-0.5}>32</Txt>
        <Txt $s={37} $ml={1}>名</Txt>
        <Spacer />
        <Txt $s={32.5} $c={ORANGE}>详情</Txt>
        <svg width="32" height="28" viewBox="0 0 32 28">
          <path d="M5 1L16 14L5 27M17 1L28 14L17 27" fill="none" stroke={ORANGE} strokeWidth="2.4" />
        </svg>
      </Rank>

      <BottomBar>
        <IndexBox>
          <svg width="230" height="8" viewBox="0 0 230 8">
            <path d="M105 8L115.5 0L126 8Z" fill="#777" />
          </svg>
          <IndexLine $mt={12} $pl={54}>
            <Txt $s={35.5} $c={GREEN} $ls={-1}>1261.39</Txt>
          </IndexLine>
          <IndexLine $mt={8}>
            <Txt $s={32.5}>专业服务</Txt>
            <Txt $s={29.3} $c={GREEN} $ml={13} $ls={0.3}>−0.58%</Txt>
          </IndexLine>
        </IndexBox>
        <TradeBtn $from="#fa5048" $to="#eb726e">买</TradeBtn>
        <TradeBtn $from="#3874ff" $to="#6f98ff">卖</TradeBtn>
        <ActionBtn $w={135}>
          <ActionIcon>
            <Txt $s={49} $c={DARK} $w={500}>撤</Txt>
          </ActionIcon>
          <Txt $s={29}>撤单</Txt>
        </ActionBtn>
        <ActionBtn $w={133}>
          <ActionIcon>
            <svg width="50" height="50" viewBox="0 0 50 50" fill="none" stroke={DARK} strokeWidth="3.6">
              <rect x="2" y="2" width="46" height="46" rx="8" />
              <path d="M25 13V37M13 25H37" />
            </svg>
          </ActionIcon>
          <Txt $s={29.5}>加自选</Txt>
        </ActionBtn>
        <ActionBtn $w={135}>
          <ActionIcon>
            <svg width="42" height="10" viewBox="0 0 42 10" fill={DARK}>
              <circle cx="4.5" cy="5" r="4" />
              <circle cx="21" cy="5" r="4" />
              <circle cx="37.5" cy="5" r="4" />
            </svg>
          </ActionIcon>
          <Txt $s={29}>更多</Txt>
        </ActionBtn>
      </BottomBar>
      <HomeArea />

      <Scribble width="360" height="360" viewBox="140 570 360 360">
        <path
          d="M153 911Q170 888 187 866Q208 836 233 808Q258 783 283 759Q300 742 315 726L360 680L400 638Q417 618 430 606Q442 595 455 590Q466 586 477 586"
          fill="none"
          stroke="#000"
          strokeWidth="11"
          strokeLinecap="round"
          strokeLinejoin="round"
        />
      </Scribble>
    </Page>
  );
}
